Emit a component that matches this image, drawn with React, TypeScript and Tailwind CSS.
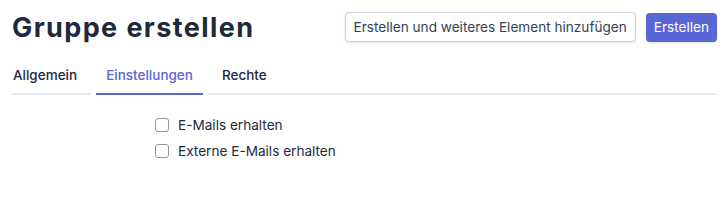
export default function App() {
  const active = "Einstellungen";
  const tabs = [
    { label: "Allgemein", cls: "pl-[1px] pr-[14px]" },
    { label: "Einstellungen", cls: "px-[10px]" },
    { label: "Rechte", cls: "flex-1 pl-[14px]" },
  ];
  return (
    <div className="min-h-[203px] bg-white pl-3 pr-[10px] font-['Inter',sans-serif] text-[#1e293b]">
      {/* header */}
      <div className="flex items-center justify-between pt-[11px]">
        <h1 className="pt-[2px] text-[27px] font-bold leading-[30px] tracking-[1.4px]">Gruppe erstellen</h1>
        <div className="flex items-center gap-[10px]">
          <button
            type="button"
            className="h-[30px] rounded-[4px] border border-[#cbd5e1] bg-white px-[8px] text-[13.6px] text-[#334155] shadow-sm"
          >
            Erstellen und weiteres Element hinzufügen
          </button>
          <button
            type="button"
            className="h-[29px] rounded-[4px] bg-[#5a66d3] px-[8px] text-[13.6px] text-white shadow-sm"
          >
            Erstellen
          </button>
        </div>
      </div>

      {/* tabs */}
      <div className="mt-[24px] flex gap-[5px]">
        {tabs.map((t) => (
          <div
            key={t.label}
            className={[
              "border-b-2 pb-[9px] text-[13.5px] font-medium leading-[17px]",
              t.cls,
              t.label === active ? "border-[#5a66d3] text-[#5a66d3]" : "border-[#e4e7f2] text-[#1e293b]",
            ].join(" ")}
          >
            {t.label}
          </div>
        ))}
      </div>

      {/* settings */}
      <div className="flex flex-col gap-[12px] pl-[143px] pt-[23px]">
        {["E-Mails erhalten", "Externe E-Mails erhalten"].map((l) => (
          <label key={l} className="flex items-center gap-[9px] text-[13.6px] leading-[14px] text-[#1e293b]">
            <span className="h-[14px] w-[14px] rounded-[3px] border border-[#8a95a8] bg-white" />
            {l}
          </label>
        ))}
      </div>
    </div>
  );
}
